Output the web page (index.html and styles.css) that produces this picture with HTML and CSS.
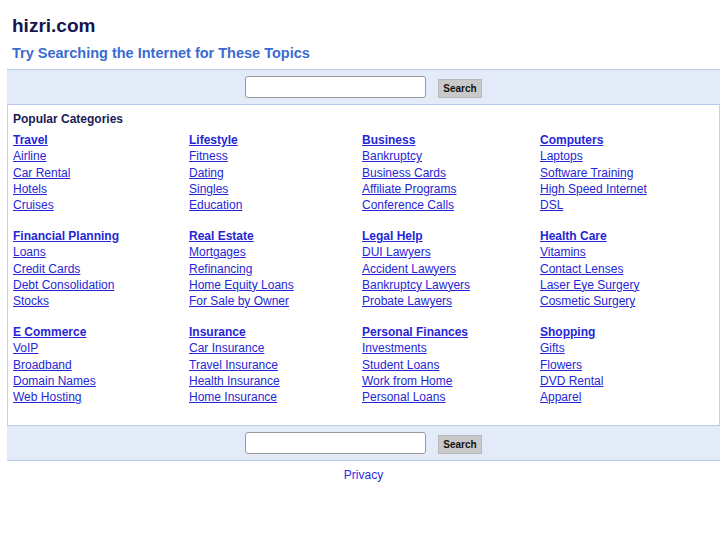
FILE: index.html
```
<!DOCTYPE html>
<html>
<head>
<meta charset="utf-8">
<title>hizri.com</title>
<link rel="stylesheet" href="styles.css">
</head>
<body>
<h1 class="site-title">hizri.com</h1>
<h2 class="subtitle">Try Searching the Internet for These Topics</h2>
<form class="search-band search-top">
  <input class="search-input" type="text">
  <button class="search-btn" type="button">Search</button>
</form>
<div class="content">
  <div class="popular">Popular Categories</div>
  <div class="grid">
    <div class="group"><a class="head" href="#">Travel</a><a href="#">Airline</a><a href="#">Car Rental</a><a href="#">Hotels</a><a href="#">Cruises</a></div>
    <div class="group"><a class="head" href="#">Lifestyle</a><a href="#">Fitness</a><a href="#">Dating</a><a href="#">Singles</a><a href="#">Education</a></div>
    <div class="group"><a class="head" href="#">Business</a><a href="#">Bankruptcy</a><a href="#">Business Cards</a><a href="#">Affiliate Programs</a><a href="#">Conference Calls</a></div>
    <div class="group"><a class="head" href="#">Computers</a><a href="#">Laptops</a><a href="#">Software Training</a><a href="#">High Speed Internet</a><a href="#">DSL</a></div>

    <div class="group"><a class="head" href="#">Financial Planning</a><a href="#">Loans</a><a href="#">Credit Cards</a><a href="#">Debt Consolidation</a><a href="#">Stocks</a></div>
    <div class="group"><a class="head" href="#">Real Estate</a><a href="#">Mortgages</a><a href="#">Refinancing</a><a href="#">Home Equity Loans</a><a href="#">For Sale by Owner</a></div>
    <div class="group"><a class="head" href="#">Legal Help</a><a href="#">DUI Lawyers</a><a href="#">Accident Lawyers</a><a href="#">Bankruptcy Lawyers</a><a href="#">Probate Lawyers</a></div>
    <div class="group"><a class="head" href="#">Health Care</a><a href="#">Vitamins</a><a href="#">Contact Lenses</a><a href="#">Laser Eye Surgery</a><a href="#">Cosmetic Surgery</a></div>

    <div class="group"><a class="head" href="#">E Commerce</a><a href="#">VoIP</a><a href="#">Broadband</a><a href="#">Domain Names</a><a href="#">Web Hosting</a></div>
    <div class="group"><a class="head" href="#">Insurance</a><a href="#">Car Insurance</a><a href="#">Travel Insurance</a><a href="#">Health Insurance</a><a href="#">Home Insurance</a></div>
    <div class="group"><a class="head" href="#">Personal Finances</a><a href="#">Investments</a><a href="#">Student Loans</a><a href="#">Work from Home</a><a href="#">Personal Loans</a></div>
    <div class="group"><a class="head" href="#">Shopping</a><a href="#">Gifts</a><a href="#">Flowers</a><a href="#">DVD Rental</a><a href="#">Apparel</a></div>
  </div>
</div>
<form class="search-band search-bottom">
  <input class="search-input" type="text">
  <button class="search-btn" type="button">Search</button>
</form>
<div class="footer"><a class="privacy" href="#">Privacy</a></div>
</body>
</html>
```
FILE: styles.css
```
html, body {
  background: #ffffff;
}
body {
  margin: 0 7px;
  font-family: "Liberation Sans", Arial, sans-serif;
  font-size: 12px;
}
.site-title {
  margin: 0;
  padding: 15px 5px 0;
  font-size: 19px;
  line-height: 22px;
  font-weight: bold;
  color: #16164f;
}
.subtitle {
  margin: 8px 0 0;
  padding: 0 5px;
  font-size: 14.5px;
  line-height: 17px;
  font-weight: bold;
  color: #3a6bd0;
}
.search-band {
  margin: 7px 0 0;
  height: 34px;
  background: #e4ebf8;
  border-top: 1px solid #b9c9ec;
  border-bottom: 1px solid #b9c9ec;
  display: flex;
  justify-content: center;
  align-items: flex-end;
  gap: 12px;
  box-sizing: content-box;
}
.search-bottom {
  margin-top: 0;
  border-top: none;
}
.search-input {
  width: 181px;
  height: 22px;
  box-sizing: border-box;
  margin: 0 0 6px;
  border: 1px solid #9a9a9a;
  border-radius: 3px;
  background: #ffffff;
  padding: 0 3px;
}
.search-btn {
  width: 44px;
  height: 19px;
  box-sizing: border-box;
  margin: 0 0 6px;
  padding: 0;
  border: 1px solid #b8b8b8;
  border-radius: 0;
  background: #c9c9c9;
  font-family: "Liberation Sans", Arial, sans-serif;
  font-weight: bold;
  font-size: 10px;
  color: #111;
}
.content {
  border-left: 1px solid #c5d2f0;
  border-right: 1px solid #c5d2f0;
  border-bottom: 1px solid #b9c9ec;
  padding: 6px 5px 20px;
}
.popular {
  font-weight: bold;
  font-size: 12px;
  line-height: 16px;
  color: #1b1b55;
}
.grid {
  margin-top: 5px;
  display: grid;
  grid-template-columns: 176px 173px 178px 1fr;
  row-gap: 14.5px;
}
.group {
  display: flex;
  flex-direction: column;
  align-items: flex-start;
}
.group a {
  color: #2626d6;
  text-decoration: underline;
  line-height: 16.3px;
  font-size: 12px;
}
.group a.head {
  font-weight: bold;
}
.footer {
  text-align: center;
  padding-top: 6px;
  line-height: 16px;
}
.privacy {
  color: #2a2ae0;
  text-decoration: none;
  font-size: 12px;
}
```
